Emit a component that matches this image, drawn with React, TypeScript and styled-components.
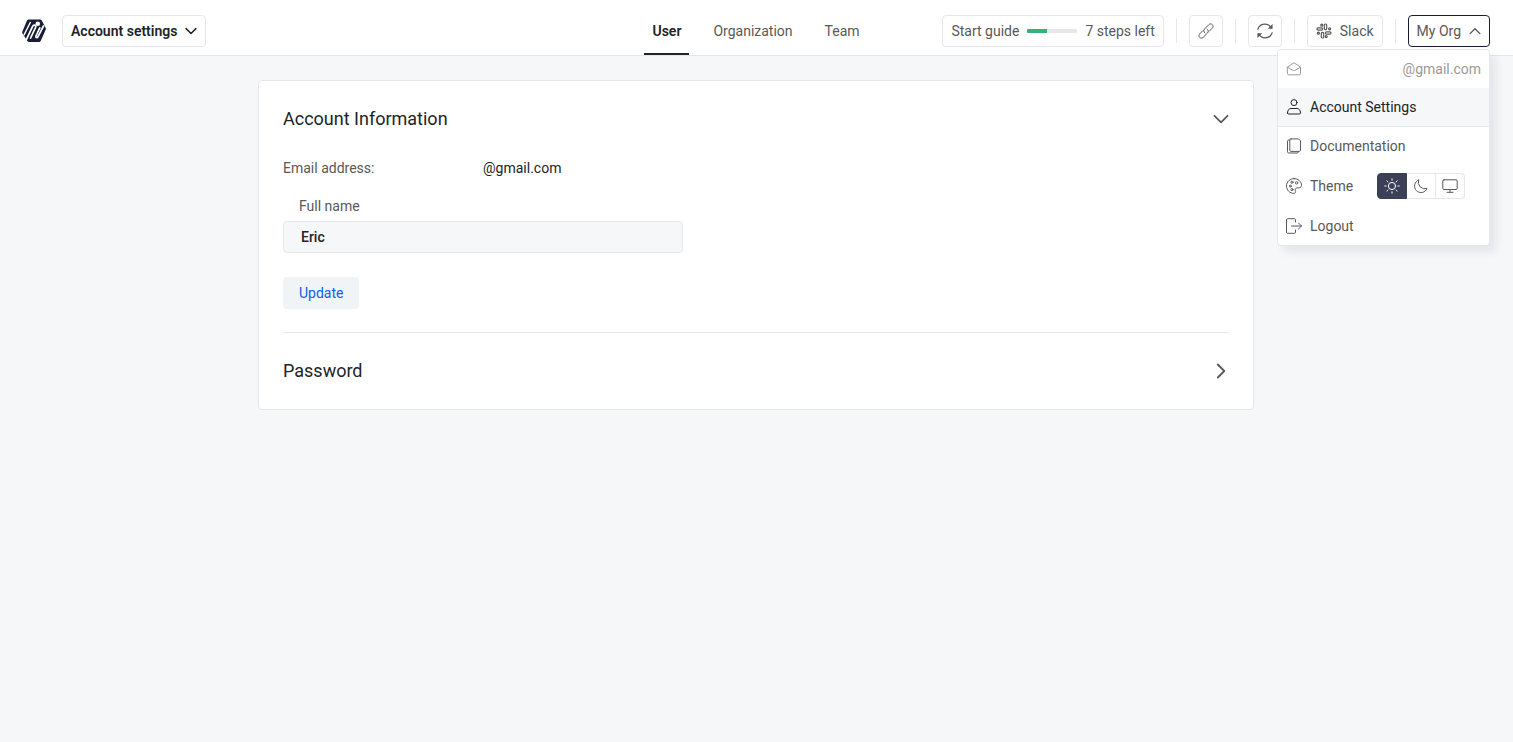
import React, { useState } from "react";
import styled, { createGlobalStyle, css } from "styled-components";

const color = {
  page: "#f5f7f9",
  surface: "#ffffff",
  border: "#e6e7ec",
  ink: "#202427",
  text: "#595959",
  muted: "#999999",
  navy: "#1a1d37",
  toggle: "#3b4056",
  link: "#0c5ff4",
  action: "#f0f4f7",
  green: "#36b274",
};

const GlobalStyle = createGlobalStyle`
  * { box-sizing: border-box; }
  body {
    margin: 0;
    min-height: 100vh;
    background: ${color.page};
    color: ${color.text};
    font-family: Roboto, "Liberation Sans", sans-serif;
    font-size: 14px;
    line-height: 22px;
  }
  button, input { font: inherit; color: inherit; }
  button { cursor: pointer; }
`;

const Header = styled.header`
  display: grid;
  grid-template-columns: 1fr auto 1fr;
  align-items: end;
  padding: 0 23px 0 22px;
  background: ${color.surface};
  border-bottom: 1px solid ${color.border};
`;

const HeaderSide = styled.div<{ $end?: boolean }>`
  display: flex;
  align-items: center;
  justify-content: ${(p) => (p.$end ? "flex-end" : "flex-start")};
  gap: ${(p) => (p.$end ? 12 : 16)}px;
  padding: 15px 0 8px;
  white-space: nowrap;
`;

const LogoLink = styled.a`
  display: flex;
`;

const BarButton = styled.button<{ $strong?: boolean; $open?: boolean }>`
  display: inline-flex;
  align-items: center;
  gap: 8px;
  height: 32px;
  padding: 0 8px;
  border: 1px solid ${(p) => (p.$open ? color.navy : color.border)};
  border-radius: 4px;
  background: ${color.surface};
  ${(p) =>
    p.$strong &&
    css`
      color: ${color.ink};
      font-weight: 600;
    `}
`;

const Divider = styled.span`
  width: 1px;
  height: 24px;
  background: ${color.border};
`;

const Progress = styled.span`
  display: block;
  width: 50px;
  height: 4px;
  border-radius: 1px;
  overflow: hidden;
  background: ${color.border};
`;

const ProgressValue = styled.span`
  display: block;
  height: 100%;
  background: ${color.green};
`;

const Tabs = styled.nav`
  display: flex;
  gap: 16px;
`;

const Tab = styled.a<{ $active?: boolean }>`
  padding: 20px 8px 11px;
  border-bottom: 2px solid ${(p) => (p.$active ? color.ink : "transparent")};
  color: ${(p) => (p.$active ? color.ink : color.text)};
  font-weight: ${(p) => (p.$active ? 600 : 400)};
  text-decoration: none;
`;

const MenuAnchor = styled.div`
  position: relative;
`;

const Menu = styled.div`
  position: absolute;
  z-index: 10;
  top: calc(100% + 2px);
  right: 0;
  width: 213px;
  border: 1px solid ${color.border};
  border-radius: 4px;
  overflow: hidden;
  background: ${color.surface};
  box-shadow: 6px 6px 8px rgba(30, 35, 60, 0.08);
`;

const rowStyle = css`
  display: flex;
  align-items: center;
  gap: 8px;
  width: 100%;
  min-height: 38px;
  padding: 0 8px;
`;

const MenuEmail = styled.div`
  ${rowStyle}
  justify-content: space-between;
  color: ${color.muted};
`;

const MenuLink = styled.a<{ $current?: boolean }>`
  ${rowStyle}
  text-decoration: none;
  color: ${color.text};
  ${(p) =>
    p.$current &&
    css`
      min-height: 39px;
      border-bottom: 1px solid ${color.border};
      background: ${color.page};
      color: ${color.ink};
    `}
`;

const MenuButton = styled.button`
  ${rowStyle}
  border: 0;
  background: none;
`;

const ThemeRow = styled.div`
  ${rowStyle}
  min-height: 42px;
`;

const ThemeSwitch = styled.div`
  display: flex;
  height: 26px;
  margin-left: 16px;
`;

const ThemeRadio = styled.input`
  position: absolute;
  opacity: 0;
  margin: 0;
`;

const ThemeOption = styled.label<{ $on: boolean }>`
  display: flex;
  align-items: center;
  justify-content: center;
  width: 29px;
  border: 1px solid ${color.border};
  border-left-width: 0;
  cursor: pointer;
  &:first-child {
    width: 30px;
    border-left-width: 1px;
    border-radius: 4px 0 0 4px;
  }
  &:last-child {
    border-radius: 0 4px 4px 0;
  }
  ${(p) =>
    p.$on &&
    css`
      border-color: ${color.toggle};
      background: ${color.toggle};
      color: #fff;
    `}
`;

const Main = styled.main`
  padding: 24px 25px 24px 24px;
`;

const Card = styled.div`
  max-width: 996px;
  margin: 0 auto;
  padding: 0 24px;
  border: 1px solid ${color.border};
  border-radius: 4px;
  background: ${color.surface};
`;

const Section = styled.section`
  padding: 24px 0;
  & + & {
    border-top: 1px solid ${color.border};
  }
  &:first-child {
    padding-bottom: 23px;
  }
`;

const SectionTitle = styled.h2`
  margin: 0;
  font-size: 18px;
  font-weight: 400;
  line-height: 28px;
`;

const SectionToggle = styled.button`
  display: flex;
  align-items: center;
  justify-content: space-between;
  width: 100%;
  padding: 0;
  border: 0;
  background: none;
  color: ${color.ink};
  text-align: left;
  svg {
    color: ${color.text};
  }
`;

const Details = styled.dl`
  display: grid;
  grid-template-columns: 200px 1fr;
  margin: 24px 0 16px;
`;

const Term = styled.dt``;

const Value = styled.dd`
  margin: 0;
  color: ${color.ink};
`;

const Form = styled.form`
  display: flex;
  flex-direction: column;
  align-items: flex-start;
`;

const FieldLabel = styled.label`
  padding: 0 16px;
`;

const TextInput = styled.input`
  width: 400px;
  max-width: 100%;
  height: 32px;
  margin: 4px 0 24px;
  padding: 0 17px;
  border: 1px solid ${color.border};
  border-radius: 4px;
  background: ${color.page};
  color: ${color.ink};
  font-weight: 500;
`;

const UpdateButton = styled.button`
  height: 32px;
  padding: 0 16px;
  border: 0;
  border-radius: 4px;
  background: ${color.action};
  color: ${color.link};
`;

const Svg = styled.svg`
  display: block;
  flex: none;
  fill: none;
  stroke: currentColor;
  stroke-linecap: round;
  stroke-linejoin: round;
`;

const Icon = ({ size = 16, weight = 1, children }: { size?: number; weight?: number; children: React.ReactNode }) => (
  <Svg width={size} height={size} viewBox="0 0 16 16" strokeWidth={weight} aria-hidden="true">
    {children}
  </Svg>
);

const Logo = () => (
  <svg width="24" height="24" viewBox="0 0 24 24" role="img" aria-label="Home">
    <path d="M6.900.5h11c.9 0 1.500.4 1.900 1.100l3.800 7.200c.4.700.4 1.300.1 2l-4.900 10.900c-.4.900-1 1.400-2 1.400H7.200c-.8 0-1.400-.4-1.800-1.100L.5 14.500c-.4-.7-.4-1.300-.1-2L4.900 1.800C5.300.9 5.900.5 6.900.5z" fill={color.navy} />
    <g stroke="#fff" fill="none" strokeLinecap="round">
      <path d="M8.300 3.500 2 16" strokeWidth="1.500" />
      <path d="M4.600 20.200 10.600 7.300c.9-1.900 4-1.400 3 1L8.600 19" strokeWidth="1.700" />
      <path d="m17.800 8.800-3.800 8.200c-.7 1.600 1.200 2.300 1.900.8L21.500 7" strokeWidth="1.700" />
    </g>
    <circle cx="15.800" cy="4.700" r="2.300" fill="#fff" />
  </svg>
);

const ChevronDown = ({ size, weight }: { size: number; weight: number }) => (
  <Icon size={size} weight={weight}><path d="M1.500 4.800 8 11.300l6.500-6.500" /></Icon>
);

const ChevronUp = () => (
  <Icon size={12} weight={1.800}><path d="M1.500 11.500 8 5l6.500 6.500" /></Icon>
);

const ChevronRight = () => (
  <Icon weight={1.800}><path d="m4.800 1.500 6.500 6.500-6.500 6.500" /></Icon>
);

const LinkIcon = () => (
  <Icon>
    <path d="M6.900 9.900C5.500 9 5.300 7.200 6.500 6l4.200-4.200c1.200-1.200 2.600-1.200 3.600-.2s1 2.500-.1 3.600L11.500 8" />
    <path d="M9.100 6.100c1.400.9 1.600 2.700.4 3.900l-4.200 4.200c-1.200 1.200-2.600 1.200-3.600.2s-1-2.500.1-3.600L4.500 8" />
  </Icon>
);

const RefreshIcon = () => (
  <Icon weight={1.200}>
    <path d="M.8 6.200C2 3 4.800 1.200 8 1.200c2.500 0 4.700 1.200 6.300 3.600M15.200 9.800C14 13 11.200 14.800 8 14.800c-2.500 0-4.700-1.200-6.300-3.600" />
    <path d="M15.600 1v4.800h-4.800zM.4 15v-4.800h4.800z" fill="currentColor" stroke="none" />
  </Icon>
);

const SlackIcon = () => (
  <Icon weight={1.200}>
    <rect x="8.300" y="1" width="2.400" height="5.600" rx="1.100" />
    <rect x="1" y="4.800" width="5.600" height="2.400" rx="1.100" />
    <rect x="5.300" y="9.400" width="2.400" height="5.600" rx="1.100" />
    <rect x="9.400" y="8.800" width="5.600" height="2.400" rx="1.100" />
    <circle cx="5.800" cy="2.200" r="1" />
    <circle cx="13.600" cy="5.800" r="1" />
    <circle cx="2.400" cy="10.200" r="1" />
    <circle cx="10.200" cy="13.600" r="1" />
  </Icon>
);

const MailIcon = () => (
  <Icon>
    <path d="M1.500 6 7.300 2.200a1.200 1.200 0 0 1 1.400 0L14.500 6v6.800c0 .6-.4 1-1 1h-11c-.6 0-1-.4-1-1z" />
    <path d="m1.700 6.300 5.600 3.200c.5.300.9.300 1.400 0l5.600-3.200" />
  </Icon>
);

const UserIcon = () => (
  <Icon>
    <circle cx="8" cy="3.600" r="3" />
    <path d="M1.500 14c0-3.200 1.800-4.500 3.500-4.500h6c1.700 0 3.500 1.300 3.500 4.500 0 .6-.4 1-1 1h-11c-.6 0-1-.4-1-1z" />
  </Icon>
);

const DocsIcon = () => (
  <Icon>
    <path d="M5 .9h7.500l2 2v9.300c0 .7-.5 1.200-1.200 1.200H5c-.7 0-1.200-.5-1.200-1.200V2.100C3.800 1.400 4.300.9 5 .9z" />
    <path d="M3.600 2H2.700c-.7 0-1.200.5-1.200 1.200v10.500c0 .8.500 1.300 1.200 1.300h8.500c.7 0 1.200-.5 1.200-1.200v-.3" />
  </Icon>
);

const PaletteIcon = () => (
  <Icon>
    <path d="M8 .6C3.900.6.500 3.900.5 8s3.300 7.400 7.300 7.400c1.300 0 2-.8 1.800-1.900-.1-.6-.5-.9-.5-1.600 0-1.200.9-2 2-2h1.800c1.500 0 2.600-1.100 2.600-2.500C15.500 3.500 12.100.6 8 .6z" />
    <circle cx="6" cy="4.200" r="1.100" />
    <circle cx="10.600" cy="4.800" r="1.200" />
    <circle cx="4.300" cy="8.100" r="1" />
    <circle cx="6" cy="11.600" r="1.100" />
  </Icon>
);

const LogoutIcon = () => (
  <Icon>
    <path d="M9.500 4V1.700c0-.6-.4-1-1-1h-7c-.6 0-1 .4-1 1v12.600c0 .6.400 1 1 1h7c.6 0 1-.4 1-1V12M5.500 8h10M12.500 5l3 3-3 3" />
  </Icon>
);

const SunIcon = () => (
  <Icon>
    <circle cx="8" cy="8" r="3.600" />
    <path d="M8 .8v1.400M8 13.800v1.400M.8 8h1.400M13.800 8h1.400M2.900 2.900l1 1M12.100 12.100l1 1M2.900 13.100l1-1M12.100 3.900l1-1" />
  </Icon>
);

const MoonIcon = () => (
  <Icon>
    <path d="M5.600 2A6.500 6.500 0 1 0 14 10.500 6.700 6.700 0 0 1 5.600 2z" />
  </Icon>
);

const MonitorIcon = () => (
  <Icon>
    <rect x=".8" y="1.800" width="14.400" height="9.700" rx="1.200" />
    <path d="M8 11.500v2.700M5 14.300h6" />
  </Icon>
);

const tabs = ["User", "Organization", "Team"];

const themes = [
  { id: "light", label: "Light", icon: <SunIcon /> },
  { id: "dark", label: "Dark", icon: <MoonIcon /> },
  { id: "system", label: "System", icon: <MonitorIcon /> },
];

export default function App() {
  const [theme, setTheme] = useState("light");
  const [menuOpen, setMenuOpen] = useState(true);
  const [name, setName] = useState("Eric");
  const progress = 40;

  return (
    <>
      <GlobalStyle />
      <Header>
        <HeaderSide>
          <LogoLink href="#home"><Logo /></LogoLink>
          <BarButton $strong type="button">
            Account settings
            <ChevronDown size={12} weight={2} />
          </BarButton>
        </HeaderSide>
        <Tabs aria-label="Settings">
          {tabs.map((tab, i) => (
            <Tab key={tab} href={`#${tab.toLowerCase()}`} $active={i === 0} aria-current={i === 0 ? "page" : undefined}>
              {tab}
            </Tab>
          ))}
        </Tabs>
        <HeaderSide $end>
          <BarButton type="button">
            Start guide
            <Progress><ProgressValue style={{ width: `${progress}%` }} /></Progress>
            7 steps left
          </BarButton>
          <Divider />
          <BarButton type="button" aria-label="Copy link"><LinkIcon /></BarButton>
          <Divider />
          <BarButton type="button" aria-label="Refresh"><RefreshIcon /></BarButton>
          <Divider />
          <BarButton type="button"><SlackIcon />Slack</BarButton>
          <Divider />
          <MenuAnchor>
            <BarButton type="button" $open={menuOpen} aria-expanded={menuOpen} onClick={() => setMenuOpen(!menuOpen)}>
              My Org
              <ChevronUp />
            </BarButton>
            {menuOpen && (
              <Menu>
                <MenuEmail><MailIcon />@gmail.com</MenuEmail>
                <MenuLink href="#account" $current><UserIcon />Account Settings</MenuLink>
                <MenuLink href="#docs"><DocsIcon />Documentation</MenuLink>
                <ThemeRow role="radiogroup" aria-label="Theme">
                  <PaletteIcon />
                  Theme
                  <ThemeSwitch>
                    {themes.map((t) => (
                      <ThemeOption key={t.id} $on={theme === t.id}>
                        <ThemeRadio
                          type="radio"
                          name="theme"
                          aria-label={t.label}
                          checked={theme === t.id}
                          onChange={() => setTheme(t.id)}
                        />
                        {t.icon}
                      </ThemeOption>
                    ))}
                  </ThemeSwitch>
                </ThemeRow>
                <MenuButton type="button"><LogoutIcon />Logout</MenuButton>
              </Menu>
            )}
          </MenuAnchor>
        </HeaderSide>
      </Header>
      <Main>
        <Card>
          <Section>
            <SectionTitle>
              <SectionToggle type="button" aria-expanded="true">
                Account Information
                <ChevronDown size={16} weight={1.800} />
              </SectionToggle>
            </SectionTitle>
            <Details>
              <Term>Email address:</Term>
              <Value>@gmail.com</Value>
            </Details>
            <Form onSubmit={(e) => e.preventDefault()}>
              <FieldLabel htmlFor="full-name">Full name</FieldLabel>
              <TextInput id="full-name" value={name} onChange={(e) => setName(e.target.value)} />
              <UpdateButton type="submit">Update</UpdateButton>
            </Form>
          </Section>
          <Section>
            <SectionTitle>
              <SectionToggle type="button" aria-expanded="false">
                Password
                <ChevronRight />
              </SectionToggle>
            </SectionTitle>
          </Section>
        </Card>
      </Main>
    </>
  );
}
